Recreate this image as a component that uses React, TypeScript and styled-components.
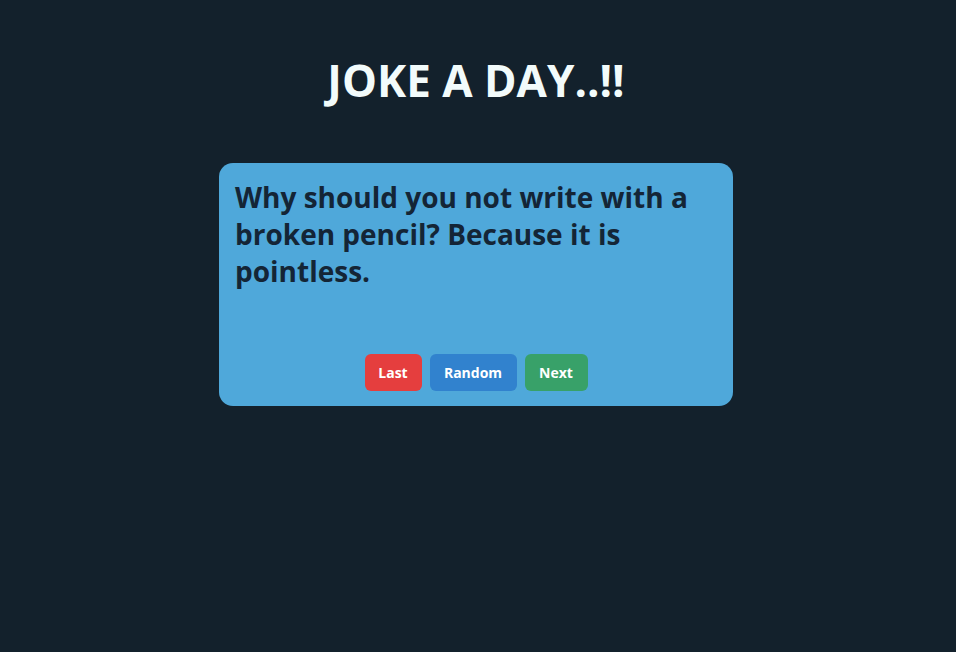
import React from "react";
import styled, { createGlobalStyle } from "styled-components";

const Global = createGlobalStyle`
  html, body { margin: 0; padding: 0; background: #13212c; }
  body { font-family: "Open Sans", "Noto Sans", sans-serif; }
`;

const Page = styled.div`
  min-height: 652px;
  display: flex;
  flex-direction: column;
  align-items: center;
  padding: 52px 4px 0 0;
  box-sizing: border-box;
`;

const Title = styled.h1`
  margin: 0 0 55px;
  font-size: 44px;
  line-height: 56px;
  font-weight: 700;
  color: #f2fbfb;
  letter-spacing: 0;
`;

const Card = styled.div`
  width: 514px;
  height: 243px;
  box-sizing: border-box;
  background: #4fa8da;
  border-radius: 14px;
  padding: 16px 16px 15px;
  display: flex;
  flex-direction: column;
  justify-content: space-between;
`;

const Joke = styled.p`
  margin: 0;
  font-size: 28px;
  line-height: 37px;
  font-weight: 700;
  color: #142536;
`;

const Actions = styled.div`
  display: flex;
  justify-content: center;
  gap: 8px;
`;

const Button = styled.button<{ $bg: string; $w: number }>`
  width: ${(p) => p.$w}px;
  height: 37px;
  border: none;
  border-radius: 6px;
  background: ${(p) => p.$bg};
  color: #ffffff;
  font-family: "Open Sans", "Noto Sans", sans-serif;
  font-size: 14px;
  font-weight: 700;
  padding: 0;
  cursor: pointer;
`;

export default function App() {
  return (
    <>
      <Global />
      <Page>
        <Title>JOKE A DAY..!!</Title>
        <Card>
          <Joke>
            Why should you not write with a broken pencil? Because it is
            pointless.
          </Joke>
          <Actions>
            <Button $bg="#e53e3e" $w={57}>Last</Button>
            <Button $bg="#3182ce" $w={87}>Random</Button>
            <Button $bg="#38a169" $w={63}>Next</Button>
          </Actions>
        </Card>
      </Page>
    </>
  );
}
